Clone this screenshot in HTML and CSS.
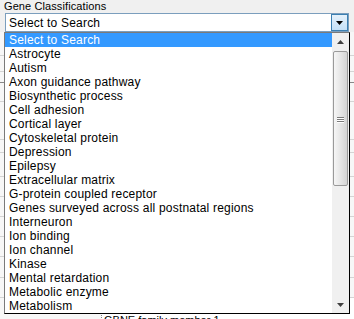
FILE: index.html
```html
<!DOCTYPE html>
<html>
<head>
<meta charset="utf-8">
<link rel="stylesheet" href="styles.css">
</head>
<body>
<div class="page">
  <div class="field">
    <div class="label">Gene Classifications</div>
    <div class="select">
      <span class="select-text">Select to Search</span>
      <span class="select-btn"><svg width="7" height="4" viewBox="0 0 7 4"><path d="M0 0H7L3.5 4Z" fill="#000"/></svg></span>
    </div>
  </div>
  <div class="behind">
    <div class="brow h24"></div>
    <div class="brow h16"></div>
    <div class="brow h11 dark"></div>
    <div class="brow h19"></div>
    <div class="brow h38"></div>
    <div class="brow h13"></div>
    <div class="brow h24"></div>
    <div class="brow h20"></div>
    <div class="brow h20"></div>
    <div class="brow h20"></div>
    <div class="brow h20"></div>
    <div class="brow h21"></div>
    <div class="brow h20"></div>
    <div class="brow last">GBNE family member 1</div>
  </div>
  <div class="dropdown">
    <ul class="options">
      <li class="selected">Select to Search</li>
      <li>Astrocyte</li>
      <li>Autism</li>
      <li>Axon guidance pathway</li>
      <li>Biosynthetic process</li>
      <li>Cell adhesion</li>
      <li>Cortical layer</li>
      <li>Cytoskeletal protein</li>
      <li>Depression</li>
      <li>Epilepsy</li>
      <li>Extracellular matrix</li>
      <li>G-protein coupled receptor</li>
      <li>Genes surveyed across all postnatal regions</li>
      <li>Interneuron</li>
      <li>Ion binding</li>
      <li>Ion channel</li>
      <li>Kinase</li>
      <li>Mental retardation</li>
      <li>Metabolic enzyme</li>
      <li>Metabolism</li>
    </ul>
    <div class="scrollbar">
      <div class="sb-arrow"><svg width="7" height="4" viewBox="0 0 7 4"><path d="M0 4H7L3.5 0Z" fill="#404040"/></svg></div>
      <div class="sb-track">
        <div class="sb-thumb"><span class="grip"></span><span class="grip"></span><span class="grip"></span></div>
      </div>
      <div class="sb-arrow"><svg width="7" height="4" viewBox="0 0 7 4"><path d="M0 0H7L3.5 4Z" fill="#404040"/></svg></div>
    </div>
  </div>
</div>
</body>
</html>
```
FILE: styles.css
```css
html, body {
  margin: 0;
  padding: 0;
}
body {
  background: #f0f0f0;
  font-family: "Liberation Sans", Arial, sans-serif;
  width: 354px;
  height: 319px;
  overflow: hidden;
}
.page {
  position: relative;
  width: 354px;
  height: 319px;
}
.field {
  padding: 0 5px 0 4px;
}
.label {
  font-size: 11px;
  line-height: 13px;
  color: #000;
  letter-spacing: 0.1px;
}
.select {
  margin-left: 1px;
  height: 17px;
  border: 1px solid #7b9ebd;
  background: #fff;
  display: flex;
  align-items: center;
  justify-content: space-between;
}
.select-text {
  font-size: 12px;
  padding-left: 3px;
  padding-top: 1px;
  color: #000;
  letter-spacing: 0.2px;
}
.select-btn {
  width: 15px;
  height: 15px;
  border: 1px solid #3c7fb1;
  background: linear-gradient(#e5f1fb, #c4e0f7);
  display: flex;
  align-items: center;
  justify-content: center;
}
.behind {
  position: absolute;
  left: 0;
  top: 32px;
  width: 354px;
  height: 287px;
  background: #f7f7f7;
  overflow: hidden;
  display: flex;
  flex-direction: column;
}
.brow {
  flex: none;
  border-bottom: 1px solid #d4d4d4;
  box-sizing: border-box;
}
.brow.dark { border-bottom-color: #888; }
.h11 { height: 11px; }
.h13 { height: 13px; }
.h16 { height: 16px; }
.h19 { height: 19px; }
.h20 { height: 20px; }
.h21 { height: 21px; }
.h24 { height: 24px; }
.h38 { height: 38px; }
.brow.last {
  border: none;
  background: #fff;
  flex: 1;
  margin-left: 101px;
  padding: 16px 0 0 2px;
  border-left: 1px dotted #888;
  font-size: 11px;
  line-height: 12px;
  color: #000;
  white-space: nowrap;
}
.dropdown {
  position: absolute;
  left: 4px;
  top: 32px;
  width: 344px;
  height: 280px;
  border: 1px solid #000;
  border-left-color: #7a7a7a;
  border-top-color: #7a7a7a;
  background: #fff;
  display: flex;
}
.options {
  list-style: none;
  margin: 0;
  padding: 0;
  flex: 1;
  overflow: hidden;
}
.options li {
  height: 14px;
  line-height: 15px;
  font-size: 12px;
  padding-left: 4px;
  color: #000;
  white-space: nowrap;
  letter-spacing: 0.2px;
}
.options li.selected {
  background: #3399ff;
  color: #fff;
}
.scrollbar {
  width: 17px;
  background: #f0f0f0;
  display: flex;
  flex-direction: column;
}
.sb-arrow {
  height: 17px;
  display: flex;
  align-items: center;
  justify-content: center;
}
.sb-track {
  flex: 1;
  padding: 1px 1px 0;
}
.sb-thumb {
  height: 135px;
  border: 1px solid #9a9a9a;
  border-radius: 2px;
  background: linear-gradient(to right, #f6f6f6, #e6e6e6 50%, #d4d4d4);
  display: flex;
  flex-direction: column;
  align-items: center;
  justify-content: center;
  padding-top: 3px;
  box-sizing: border-box;
}
.grip {
  width: 7px;
  height: 1px;
  background: #7a7a7a;
  box-shadow: 0 1px 0 #fff;
  margin-bottom: 1px;
}
```
